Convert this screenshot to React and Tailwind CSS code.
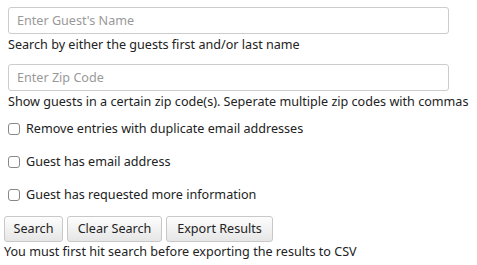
export default function App() {
  const font = { fontFamily: '"Noto Sans", "Open Sans", sans-serif' };
  return (
    <div className="bg-white w-[477px] h-[265px] text-[12.6px] text-[#222] leading-[16px] whitespace-nowrap" style={font}>
      <div className="pt-[7px] pl-[8px]">
        <input
          className="block w-[441px] h-[27px] border border-[#ccc] rounded-[3px] px-[8px] text-[12.6px] placeholder:text-[#999] outline-none"
          placeholder="Enter Guest's Name"
        />
        <div className="mt-[3px]">Search by either the guests first and/or last name</div>
        <input
          className="block mt-[11px] w-[441px] h-[27px] border border-[#ccc] rounded-[3px] px-[8px] text-[12.6px] placeholder:text-[#999] outline-none"
          placeholder="Enter Zip Code"
        />
        <div className="mt-[3px]">Show guests in a certain zip code(s). Seperate multiple zip codes with commas</div>
        <div className="mt-[11px] flex flex-col gap-[17px]">
          {["Remove entries with duplicate email addresses", "Guest has email address", "Guest has requested more information"].map((t) => (
            <label key={t} className="flex items-center gap-[6px] h-[16px]">
              <span className="w-[12px] h-[12px] border border-[#888] rounded-[3px] bg-white" />
              <span>{t}</span>
            </label>
          ))}
        </div>
      </div>
      <div className="pl-[4px] mt-[13px] flex gap-[4px]">
        {[["Search", "w-[59px]"], ["Clear Search", "w-[95px]"], ["Export Results", "w-[107px]"]].map(([t, w]) => (
          <button
            key={t}
            className={`${w} h-[26px] border border-[#c8c8c8] rounded-[3px] bg-gradient-to-b from-[#fdfdfd] to-[#e6e6e6] text-[12.6px] text-[#222] text-center`}
          >
            {t}
          </button>
        ))}
      </div>
      <div className="pl-[4px] mt-[2px]">You must first hit search before exporting the results to CSV</div>
    </div>
  );
}
